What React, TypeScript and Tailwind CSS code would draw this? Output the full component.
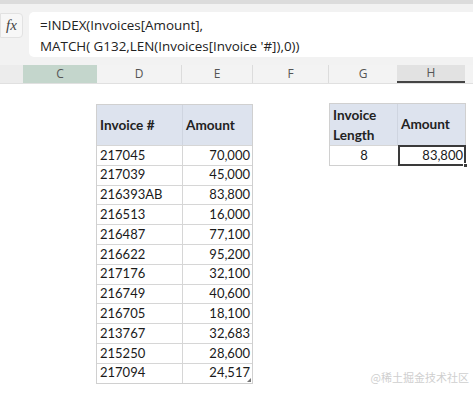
import React from "react";

const rows: [string, string][] = [
  ["217045", "70,000"],
  ["217039", "45,000"],
  ["216393AB", "83,800"],
  ["216513", "16,000"],
  ["216487", "77,100"],
  ["216622", "95,200"],
  ["217176", "32,100"],
  ["216749", "40,600"],
  ["216705", "18,100"],
  ["213767", "32,683"],
  ["215250", "28,600"],
  ["217094", "24,517"],
];

const cellFont = { fontFamily: "Lato, 'Noto Sans', sans-serif" };

export default function App() {
  return (
    <div className="w-[473px] h-[395px] overflow-hidden bg-white relative" style={cellFont}>
      {/* top strip */}
      <div className="h-[4px] bg-[#dcdcdc]" />
      {/* formula bar */}
      <div className="h-[61px] bg-[#f2f2f2] flex items-start pt-[8px]">
        <div className="w-[23px] h-[25px] mt-[1px] bg-[#f7f7f7] border border-[#e2e2e2] rounded-r-[4px] flex items-center justify-center">
          <span className="text-[15px] italic text-[#444]" style={{ fontFamily: "'Liberation Serif', serif" }}>
            fx
          </span>
        </div>
        <div
          className="ml-[6px] flex-1 h-[45px] bg-white rounded-l-[5px] pl-[11px] pt-[3px] text-[13.4px] leading-[21px] text-[#222]"
          style={{ fontFamily: "'Open Sans', 'Noto Sans', sans-serif" }}
        >
          <div>=INDEX(Invoices[Amount],</div>
          <div>MATCH( G132,LEN(Invoices[Invoice '#]),0))</div>
        </div>
      </div>
      {/* column header row */}
      <div
        className="h-[19px] flex bg-[#f3f3f3] border-b border-[#e0e0e0] text-[12px] text-[#555]"
        style={{ fontFamily: "'Open Sans', 'Noto Sans', sans-serif" }}
      >
        <div className="w-[23px] bg-[#ececec]" />
        <div className="w-[74px] bg-[#c4d6cc] flex items-center justify-center">C</div>
        <div className="w-[85px] border-r border-[#dcdcdc] flex items-center justify-center">D</div>
        <div className="w-[71px] border-r border-[#dcdcdc] flex items-center justify-center">E</div>
        <div className="w-[76px] border-r border-[#dcdcdc] flex items-center justify-center">F</div>
        <div className="w-[68px] flex items-center justify-center">G</div>
        <div className="w-[68px] bg-[#e2e2e2] border-b-2 border-[#444] flex items-center justify-center">H</div>
        <div className="flex-1" />
      </div>
      {/* sheet body */}
      <div className="flex items-start pl-[96px] pt-[20px] text-[13px] text-[#1a1a1a]">
        {/* main table */}
        <div className="w-[157px] border border-[#d0d0d0] relative">
          <div className="flex h-[40px] bg-[#dde3ee] font-bold text-[13.6px] text-[#222]">
            <div className="w-[86px] border-r border-[#cfd5e0] flex items-center pl-[3px]">Invoice #</div>
            <div className="flex-1 flex items-center pl-[3px]">Amount</div>
          </div>
          {rows.map(([a, b]) => (
            <div key={a} className="flex h-[19.8px] border-t border-[#d6d6d6]">
              <div className="w-[86px] border-r border-[#d6d6d6] flex items-center pl-[3px]">{a}</div>
              <div className="flex-1 flex items-center justify-end pr-[2px]">{b}</div>
            </div>
          ))}
          <div className="absolute right-[1px] bottom-[1px] w-0 h-0 border-l-[4px] border-l-transparent border-b-[4px] border-b-[#777]" />
        </div>
        {/* right table */}
        <div className="ml-[76px] -mt-[1px] w-[137px] border border-[#d0d0d0]">
          <div className="flex h-[41px] bg-[#dde3ee] font-bold text-[13.6px] text-[#222]">
            <div className="w-[68px] border-r border-[#cfd5e0] flex flex-col justify-center pl-[3px] leading-[20px]">
              <div>Invoice</div>
              <div>Length</div>
            </div>
            <div className="flex-1 flex items-center pl-[3px]">Amount</div>
          </div>
          <div className="flex h-[20px] border-t border-[#d6d6d6]">
            <div className="w-[68px] flex items-center justify-center">8</div>
            <div className="flex-1 relative border-2 border-[#3a3a3a] -mt-[1px] -mb-[1px] -mr-[1px] flex items-center justify-end pr-[1px]">
              83,800
              <div className="absolute -right-[4px] -bottom-[4px] w-[5px] h-[5px] bg-[#3a3a3a] border border-white" />
            </div>
          </div>
        </div>
      </div>
      {/* watermark */}
      <div
        className="absolute right-[4px] bottom-[10px] text-[11px] text-[#cfcfcf]"
        style={{ fontFamily: "'Noto Sans CJK SC', sans-serif" }}
      >
        @稀土掘金技术社区
      </div>
    </div>
  );
}
